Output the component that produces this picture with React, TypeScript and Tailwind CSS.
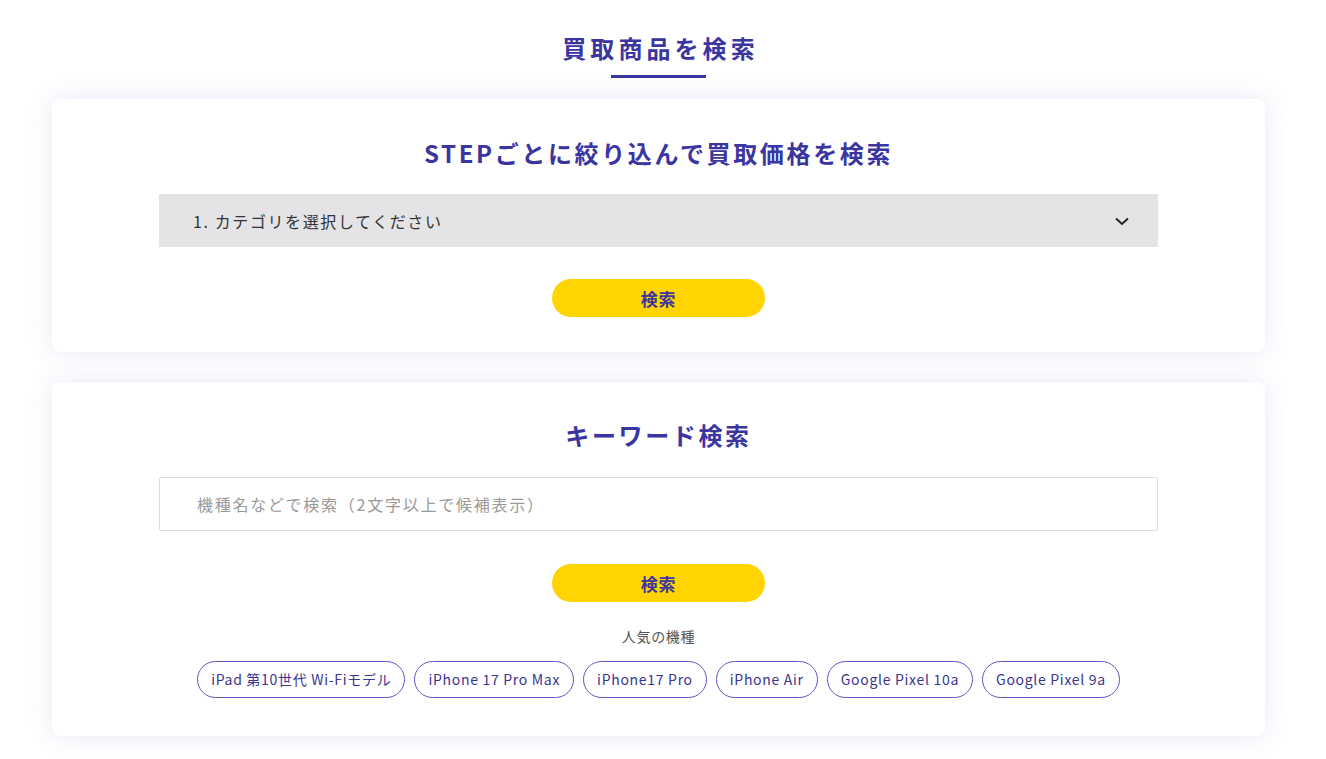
import React from "react";

const chips = [
  "iPad 第10世代 Wi-Fiモデル",
  "iPhone 17 Pro Max",
  "iPhone17 Pro",
  "iPhone Air",
  "Google Pixel 10a",
  "Google Pixel 9a",
];

const font = {
  fontFamily: '"Noto Sans CJK JP", "Noto Sans", sans-serif',
};

function SearchButton() {
  return (
    <button className="w-[213px] h-[38px] rounded-full bg-[#ffd400] text-[#3a35a0] text-[17px] font-bold tracking-[0.05em] leading-none">
      検索
    </button>
  );
}

export default function App() {
  return (
    <div className="min-h-[759px] bg-white" style={font}>
      <div className="w-[1317px]">
        <div className="flex flex-col items-center pt-[30px]">
          <h1 className="text-[24px] font-bold text-[#3a35a0] tracking-[0.17em] leading-[36px] pl-[4px]">
            買取商品を検索
          </h1>
          <div className="mt-[9px] w-[95px] h-[3px] bg-[#3a35a0]" />
        </div>

        <div className="mx-[52px] mt-[21px] flex flex-col gap-[30px]">
          <div className="bg-white rounded-[8px] shadow-[0_0_24px_rgba(70,60,190,0.12)] px-[107px] pt-[36px] pb-[35px] flex flex-col items-center">
            <h2 className="text-[24px] font-bold text-[#3a35a0] tracking-[0.11em] leading-[36px]">
              STEPごとに絞り込んで買取価格を検索
            </h2>
            <div className="mt-[23px] w-full h-[53px] bg-[#e4e4e6] flex items-center justify-between pl-[34px] pr-[28px]">
              <span className="text-[16px] text-[#333] tracking-[0.1em]">
                1. カテゴリを選択してください
              </span>
              <svg width="16" height="10" viewBox="0 0 16 10" fill="none">
                <path d="M2 2.5 L8 8 L14 2.5" stroke="#222" strokeWidth="2" />
              </svg>
            </div>
            <div className="mt-[32px]">
              <SearchButton />
            </div>
          </div>

          <div className="bg-white rounded-[8px] shadow-[0_0_24px_rgba(70,60,190,0.12)] px-[107px] pt-[35px] pb-[38px] flex flex-col items-center">
            <h2 className="text-[24px] font-bold text-[#3a35a0] tracking-[0.11em] leading-[36px]">
              キーワード検索
            </h2>
            <div className="mt-[24px] w-full h-[54px] border border-[#dcdcdf] rounded-[2px] flex items-center pl-[37px]">
              <span className="text-[16px] text-[#9a9a9a] tracking-[0.11em]">
                機種名などで検索（2文字以上で候補表示）
              </span>
            </div>
            <div className="mt-[33px]">
              <SearchButton />
            </div>
            <div className="mt-[24px] text-[14px] text-[#555] leading-[20px] tracking-[0.05em]">
              人気の機種
            </div>
            <div className="mt-[15px] flex gap-[9px]">
              {chips.map((c) => (
                <div
                  key={c}
                  className="h-[37px] px-[13px] rounded-full border border-[#5e56c4] text-[#3a3590] text-[14px] tracking-[0.05em] flex items-center"
                >
                  {c}
                </div>
              ))}
            </div>
          </div>
        </div>
      </div>
    </div>
  );
}
